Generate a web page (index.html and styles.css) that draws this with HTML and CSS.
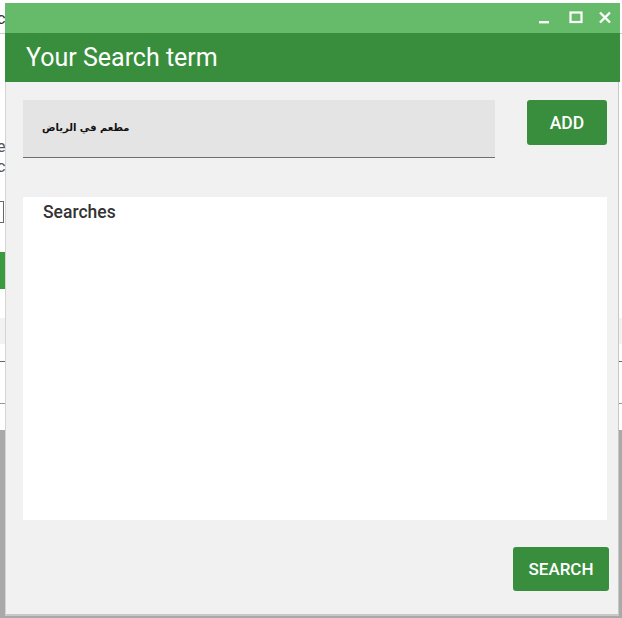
FILE: index.html
```html
<!DOCTYPE html>
<html lang="en">
<head>
  <meta charset="UTF-8" />
  <title>Your Search term</title>
  <link rel="stylesheet" href="styles.css">
</head>
<body>
  <div class="desktop">
    <div class="backdrop">
      <div class="bg-text">c</div>
      <div class="bg-rule bg-rule-1"></div>
      <div class="bg-text bg-text-2">e<br>c</div>
      <div class="bg-box"></div>
      <div class="bg-green"></div>
      <div class="bg-band"></div>
      <div class="bg-rule bg-rule-2"></div>
      <div class="bg-rule bg-rule-3"></div>
      <div class="bg-shade"></div>
    </div>

    <div class="window">
      <div class="titlebar">
        <button class="win-btn win-min" title="Minimize">
          <svg width="14" height="14" viewBox="0 0 14 14"><rect x="2" y="10" width="10" height="2.4" fill="#fff"/></svg>
        </button>
        <button class="win-btn" title="Maximize">
          <svg width="14" height="14" viewBox="0 0 14 14"><rect x="1.5" y="1.5" width="11" height="9.5" fill="none" stroke="#fff" stroke-width="2.2"/></svg>
        </button>
        <button class="win-btn" title="Close">
          <svg width="14" height="14" viewBox="0 0 14 14"><path d="M2 1.5 L12 11.5 M12 1.5 L2 11.5" stroke="#fff" stroke-width="2.4"/></svg>
        </button>
      </div>

      <div class="header">
        <h1>Your Search term</h1>
      </div>

      <div class="content">
        <div class="term-row">
          <div class="term-input"><span dir="rtl">مطعم في الرياض</span></div>
          <button class="btn btn-add">ADD</button>
        </div>

        <div class="searches">
          <div class="searches-title">Searches</div>
        </div>

        <div class="actions">
          <button class="btn btn-search">SEARCH</button>
        </div>
      </div>
    </div>
  </div>
</body>
</html>
```

FILE: styles.css
```css
* {
  box-sizing: border-box;
}

body {
  margin: 0;
  font-family: Roboto, "Liberation Sans", sans-serif;
  background: #fff;
}

.desktop {
  position: relative;
  width: 622px;
  height: 618px;
  overflow: hidden;
}

/* the page behind the dialog, only a sliver shows */
.backdrop {
  position: absolute;
  inset: 0;
  background: #fff;
}

.bg-text {
  position: absolute;
  left: -3px;
  top: 10px;
  font-size: 16px;
  line-height: 18px;
  color: #333;
}

.bg-text-2 {
  top: 137px;
  line-height: 20px;
  color: #555;
}

.bg-rule {
  position: absolute;
  left: 0;
  width: 622px;
  height: 1px;
  background: #ccc;
}

.bg-rule-1 { top: 33px; }
.bg-rule-2 { top: 361px; background: #666; }
.bg-rule-3 { top: 403px; background: #999; }

.bg-box {
  position: absolute;
  left: -8px;
  top: 201px;
  width: 12px;
  height: 22px;
  border: 1px solid #666;
}

.bg-green {
  position: absolute;
  left: 0;
  top: 252px;
  width: 6px;
  height: 37px;
  background: #3a9a3f;
}

.bg-band {
  position: absolute;
  left: 0;
  top: 318px;
  width: 622px;
  height: 26px;
  background: #f2f2f2;
}

.bg-shade {
  position: absolute;
  left: 0;
  top: 430px;
  width: 622px;
  height: 188px;
  background: #a9a9a9;
}

.window {
  position: absolute;
  left: 5px;
  top: 3px;
  width: 615px;
  height: 613px;
  display: flex;
  flex-direction: column;
}

.titlebar {
  height: 30px;
  background: #66bb6a;
  display: flex;
  justify-content: flex-end;
  align-items: center;
  padding-right: 8px;
  gap: 14px;
}

.win-btn {
  background: none;
  border: none;
  padding: 0;
  width: 15px;
  height: 14px;
  display: flex;
  align-items: center;
  justify-content: center;
  margin-top: -1px;
}

.win-min {
  margin-right: 3px;
}

.header {
  height: 49px;
  background: #388e3c;
  display: flex;
  align-items: center;
  padding-left: 21px;
}

.header h1 {
  margin: 0;
  font-size: 25px;
  font-weight: 400;
  color: #fff;
}

.content {
  flex-grow: 1;
  background: #f1f1f1;
  border-left: 1px solid #d4d4d4;
  border-right: 1px solid #c8c8c8;
  border-bottom: 2px solid #c8c8c8;
  margin-right: 1px;
  padding: 18px 11px 0 17px;
  display: flex;
  flex-direction: column;
}

.term-row {
  display: flex;
  align-items: flex-start;
  gap: 32px;
}

.term-input {
  width: 472px;
  height: 58px;
  background: #e4e4e4;
  border-bottom: 1px solid #6f6f6f;
  display: flex;
  align-items: center;
  padding: 0 0 2px 19px;
  font-family: "DejaVu Sans", sans-serif;
  font-size: 10px;
  font-weight: bold;
  color: #111;
}

.btn {
  background: #388e3c;
  color: #fff;
  border: none;
  border-radius: 3px;
  font-family: Roboto, "Liberation Sans", sans-serif;
  font-weight: 500;
  cursor: pointer;
}

.btn-add {
  width: 80px;
  height: 45px;
  font-size: 17.5px;
}

.searches {
  margin-top: 39px;
  height: 323px;
  background: #fff;
  padding: 5px 20px;
}

.searches-title {
  font-size: 17.5px;
  font-weight: 500;
  color: #333;
}

.actions {
  display: flex;
  justify-content: flex-end;
  margin-top: 27px;
  margin-right: -2px;
}

.btn-search {
  width: 96px;
  height: 44px;
  font-size: 17px;
}
```
